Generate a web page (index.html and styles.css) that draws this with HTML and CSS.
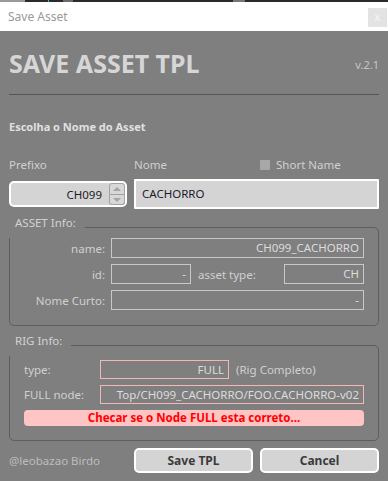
FILE: index.html
```html
<!DOCTYPE html>
<html lang="pt">
<head>
  <meta charset="UTF-8">
  <meta name="viewport" content="width=device-width, initial-scale=1.0">
  <title>Save Asset</title>
  <link rel="stylesheet" href="styles.css">
</head>
<body>
  <div class="topstrip"></div>
  <div class="titlebar">
    <span class="window-title">Save Asset</span>
    <span class="close-btn">x</span>
  </div>

  <div class="dialog">
    <div class="header">
      <h1>SAVE ASSET TPL</h1>
      <span class="version">v.2.1</span>
    </div>
    <hr class="separator">

    <h2 class="section-title">Escolha o Nome do Asset</h2>

    <!-- Prefix / name -->
    <div class="name-grid">
      <span class="field-label">Prefixo</span>
      <span class="field-label">Nome</span>
      <span class="field-label short-name"><span class="checkbox"></span>Short Name</span>

      <div class="spinbox">
        <span class="spin-value">CH099</span>
        <div class="spin-buttons">
          <span class="spin-btn up"></span>
          <span class="spin-btn down"></span>
        </div>
      </div>
      <div class="name-input">CACHORRO</div>
    </div>

    <!-- ASSET Info -->
    <fieldset class="group asset-info">
      <legend>ASSET Info:</legend>
      <div class="rows">
        <div class="info-row">
          <span class="row-label">name:</span>
          <span class="field">CH099_CACHORRO</span>
        </div>
        <div class="info-row">
          <span class="row-label">id:</span>
          <span class="field short">-</span>
          <span class="inline-label">asset type:</span>
          <span class="field short">CH</span>
        </div>
        <div class="info-row">
          <span class="row-label">Nome Curto:</span>
          <span class="field">-</span>
        </div>
      </div>
    </fieldset>

    <!-- RIG Info -->
    <fieldset class="group rig-info">
      <legend>RIG Info:</legend>
      <div class="rows">
        <div class="info-row">
          <span class="rig-label">type:</span>
          <span class="field rig type">FULL</span>
          <span class="note">(Rig Completo)</span>
        </div>
        <div class="info-row">
          <span class="rig-label">FULL node:</span>
          <span class="field rig">Top/CH099_CACHORRO/FOO.CACHORRO-v02</span>
        </div>
        <div class="warning">Checar se o Node FULL esta correto...</div>
      </div>
    </fieldset>

    <div class="footer">
      <span class="credit">@leobazao Birdo</span>
      <button class="btn">Save TPL</button>
      <button class="btn">Cancel</button>
    </div>
  </div>
</body>
</html>
```

FILE: styles.css
```css
* {
  box-sizing: border-box;
}

body {
  margin: 0;
  width: 388px;
  height: 481px;
  overflow: hidden;
  background: #7f7f7f;
  font-family: "Noto Sans", "Open Sans", sans-serif;
  font-size: 11.5px;
  color: #d2d2d2;
}

.topstrip {
  height: 2px;
  background: linear-gradient(to right, #9a9a9a 0 25px, #2a2a2a 25px 48px, #39b6d8 48px 49px, #2a2a2a 49px 63px, #6a6a6a 63px 73px, #2a2a2a 73px 233px, #777 233px 245px, #2a2a2a 245px);
}

.titlebar {
  height: 29px;
  background: #fff;
  display: flex;
  align-items: center;
  justify-content: space-between;
  padding: 0 1px 0 8px;
}

.window-title {
  font-size: 12px;
  color: #999;
}

.close-btn {
  width: 19px;
  height: 19px;
  margin-top: 1px;
  background: #e3e3e3;
  color: #f7f7f7;
  font-size: 11px;
  line-height: 18px;
  text-align: center;
}

.dialog {
  padding: 0 9px;
}

.header {
  display: flex;
  justify-content: space-between;
  margin-top: 17px;
}

.header h1 {
  margin: 0;
  font-size: 25px;
  line-height: 30px;
  font-weight: bold;
  color: #d6d6d6;
}

.version {
  align-self: flex-end;
  margin-bottom: 6px;
  font-size: 11px;
  line-height: 14px;
  color: #c6c6c6;
}

.separator {
  margin: 16px 0 0;
  border: 0;
  height: 1px;
  background: #555;
}

.section-title {
  margin: 25px 0 0;
  font-size: 11px;
  line-height: 14px;
  font-weight: bold;
  color: #e0e0e0;
}

.name-grid {
  display: grid;
  grid-template-columns: 118px 1fr 1fr;
  grid-template-rows: 16px 30px;
  column-gap: 7px;
  row-gap: 6px;
  margin-top: 23px;
}

.field-label {
  line-height: 16px;
  color: #d0d0d0;
}

.short-name {
  display: flex;
  align-items: center;
  gap: 6px;
}

.checkbox {
  width: 10px;
  height: 10px;
  background: #a8a8a8;
  border-radius: 1px;
}

.spinbox {
  align-self: center;
  height: 26px;
  display: flex;
  align-items: center;
  justify-content: flex-end;
  background: #d4d4d4;
  border: 2px solid #fff;
  border-radius: 5px;
  color: #1c1c2c;
}

.spin-value {
  margin-right: 7px;
}

.spin-buttons {
  display: flex;
  flex-direction: column;
  width: 16px;
  height: 22px;
}

.spin-btn {
  position: relative;
  flex: 1;
  background: #d8d8d8;
  border: 1px solid #a2a2a2;
}

.spin-btn.up {
  border-radius: 3px 3px 0 0;
}

.spin-btn.down {
  border-top: 0;
  border-radius: 0 0 3px 3px;
}

.spin-btn::after {
  content: "";
  position: absolute;
  left: 3px;
  top: 3px;
  border-left: 4px solid transparent;
  border-right: 4px solid transparent;
}

.spin-btn.up::after {
  border-bottom: 4px solid #a4a4a4;
}

.spin-btn.down::after {
  top: 3px;
  border-top: 4px solid #a4a4a4;
}

.name-input {
  grid-column: 2 / 4;
  height: 30px;
  background: #d4d4d4;
  border: 2px solid #fff;
  border-radius: 1px;
  padding-left: 6px;
  line-height: 26px;
  color: #1c1c2c;
}

.group {
  margin: 7px 0 0;
  min-width: 0;
  padding: 0 14px 15px;
  border: 1px solid #5e5e5e;
  border-radius: 5px;
}

.group legend {
  margin-left: -15px;
  padding: 0 9px 8px 6px;
  line-height: 14px;
  color: #d2d2d2;
}

.rig-info {
  margin-top: 8px;
  padding-top: 4px;
  padding-bottom: 14px;
}

.rows {
  display: flex;
  flex-direction: column;
  gap: 6px;
}

.info-row {
  display: flex;
  align-items: center;
  height: 20px;
}

.row-label {
  width: 81px;
  margin-right: 6px;
  text-align: right;
  color: #d0d0d0;
}

.inline-label {
  flex: 1;
  padding-left: 7px;
  color: #d0d0d0;
}

.field {
  flex: 1;
  height: 20px;
  padding: 0 4px;
  border: 1px solid #c8c8c8;
  line-height: 18px;
  text-align: right;
  color: #dcdcdc;
  white-space: nowrap;
  overflow: hidden;
}

.field.short {
  flex: none;
  width: 80px;
}

.rig-info .info-row {
  height: 19px;
}

.rig-label {
  width: 76px;
  color: #d0d0d0;
}

.field.rig {
  height: 19px;
  border-color: #f2b8b8;
  line-height: 17px;
}

.field.type {
  flex: none;
  width: 129px;
}

.note {
  margin-left: 7px;
  color: #d0d0d0;
}

.warning {
  height: 16px;
  background: #ffc4c4;
  border-radius: 4px;
  color: #f00;
  font-size: 11.5px;
  font-weight: bold;
  line-height: 16px;
  text-align: center;
}

.footer {
  display: grid;
  grid-template-columns: 118px 1fr 1fr;
  column-gap: 7px;
  align-items: center;
  margin-top: 7px;
}

.credit {
  color: #bdbdbd;
}

.btn {
  height: 25px;
  background: #d4d4d4;
  border: 2px solid #fff;
  border-radius: 5px;
  font-family: inherit;
  font-size: 12px;
  font-weight: bold;
  color: #3b3b3b;
}
```
